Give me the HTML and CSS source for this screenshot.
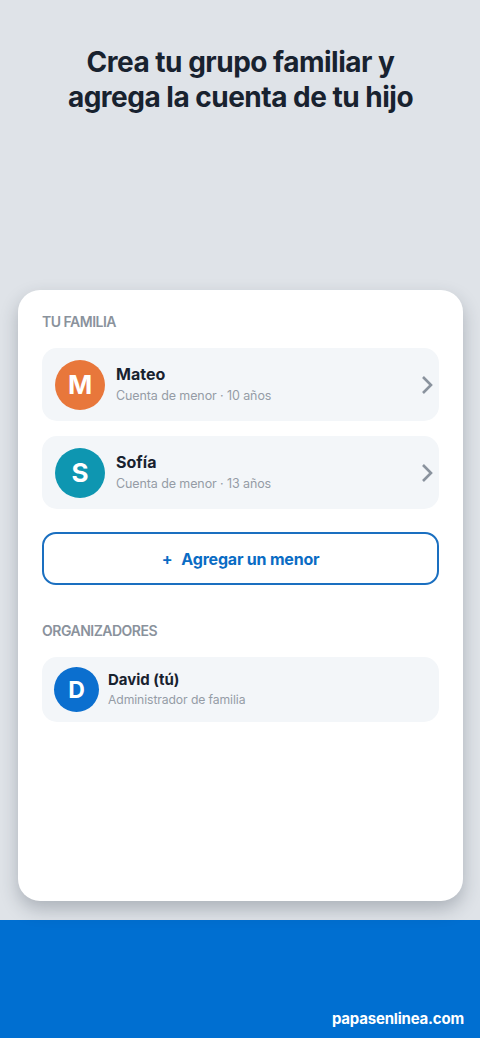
FILE: index.html
```html
<!DOCTYPE html>
<html lang="es">
<head>
<meta charset="utf-8">
<link rel="stylesheet" href="styles.css">
</head>
<body>
<div class="screen">
  <h1 class="title">Crea tu grupo familiar y<br>agrega la cuenta de tu hijo</h1>
  <div class="card">
    <div class="section-label">TU FAMILIA</div>
    <div class="list">
      <div class="row">
        <div class="avatar orange">M</div>
        <div class="info">
          <div class="name">Mateo</div>
          <div class="sub">Cuenta de menor · 10 años</div>
        </div>
        <svg class="chev" width="14" height="20" viewBox="0 0 14 20"><path d="M3 2 L11 10 L3 18" fill="none" stroke="#8a939e" stroke-width="2.6" stroke-linecap="butt" stroke-linejoin="miter"/></svg>
      </div>
      <div class="row">
        <div class="avatar teal">S</div>
        <div class="info">
          <div class="name">Sofía</div>
          <div class="sub">Cuenta de menor · 13 años</div>
        </div>
        <svg class="chev" width="14" height="20" viewBox="0 0 14 20"><path d="M3 2 L11 10 L3 18" fill="none" stroke="#8a939e" stroke-width="2.6" stroke-linecap="butt" stroke-linejoin="miter"/></svg>
      </div>
    </div>
    <button class="add-btn"><span class="plus">+</span>Agregar un menor</button>
    <div class="section-label org">ORGANIZADORES</div>
    <div class="row small">
      <div class="avatar blue">D</div>
      <div class="info">
        <div class="name">David (tú)</div>
        <div class="sub">Administrador de familia</div>
      </div>
    </div>
  </div>
</div>
<footer class="footer">
  <span class="brand">papasenlinea.com</span>
</footer>
</body>
</html>
```
FILE: styles.css
```css
* { box-sizing: border-box; }
html, body { margin: 0; padding: 0; }
body {
  width: 480px;
  height: 1038px;
  overflow: hidden;
  font-family: Inter, "Noto Sans", sans-serif;
  background: #dfe3e8;
}
.screen {
  height: 920px;
  padding: 45px 17px 0 18px;
  display: flex;
  flex-direction: column;
}
.title {
  margin: 0;
  text-align: center;
  font-size: 28px;
  line-height: 35px;
  font-weight: 700;
  color: #18222f;
  letter-spacing: -0.5px;
}
.card {
  margin-top: 175px;
  height: 611px;
  background: #ffffff;
  border-radius: 22px;
  box-shadow: 0 8px 18px rgba(40, 50, 65, 0.28);
  padding: 22px 24px 0;
  display: flex;
  flex-direction: column;
}
.section-label {
  font-size: 14px;
  font-weight: 600;
  color: #8a929c;
  letter-spacing: -0.5px;
  line-height: 20px;
}
.list {
  margin-top: 16px;
  display: flex;
  flex-direction: column;
  gap: 15px;
}
.row {
  height: 73px;
  background: #f3f6f9;
  border-radius: 15px;
  display: flex;
  align-items: center;
  padding: 0 5px 0 13px;
}
.avatar {
  width: 50px;
  height: 50px;
  border-radius: 50%;
  color: #fff;
  font-weight: 700;
  font-size: 26px;
  display: flex;
  align-items: center;
  justify-content: center;
  flex: none;
}
.orange { background: #e8773b; }
.teal { background: #0e96b1; }
.blue { background: #0b6fcf; }
.info {
  flex: 1;
  margin-left: 11px;
  display: flex;
  flex-direction: column;
}
.name {
  font-size: 16px;
  font-weight: 700;
  color: #18222f;
  line-height: 20px;
}
.sub {
  margin-top: 3px;
  font-size: 12.5px;
  color: #959ca6;
  line-height: 18px;
  letter-spacing: -0.1px;
}
.chev { flex: none; }
.add-btn {
  margin-top: 23px;
  height: 53px;
  width: 100%;
  background: #fff;
  border: 2px solid #1a6fc0;
  border-radius: 14px;
  color: #0a6cc4;
  font-family: Inter, "Noto Sans", sans-serif;
  font-size: 16px;
  font-weight: 700;
  letter-spacing: -0.2px;
  display: flex;
  align-items: center;
  justify-content: center;
  padding: 0;
}
.plus { margin-right: 9px; }
.org { margin-top: 36px; }
.row.small {
  margin-top: 16px;
  height: 65px;
  padding-left: 12px;
}
.row.small .avatar {
  width: 45px;
  height: 45px;
  font-size: 23px;
}
.row.small .info { margin-left: 9px; }
.row.small .name { font-size: 15px; line-height: 19px; }
.row.small .sub { font-size: 12.2px; margin-top: 2px; }
.footer {
  height: 118px;
  background: #006fd1;
  display: flex;
  align-items: flex-end;
  justify-content: flex-end;
  padding: 0 16px 9px 0;
}
.brand {
  color: #fff;
  font-size: 15px;
  font-weight: 700;
  line-height: 20px;
  letter-spacing: -0.2px;
}
```
